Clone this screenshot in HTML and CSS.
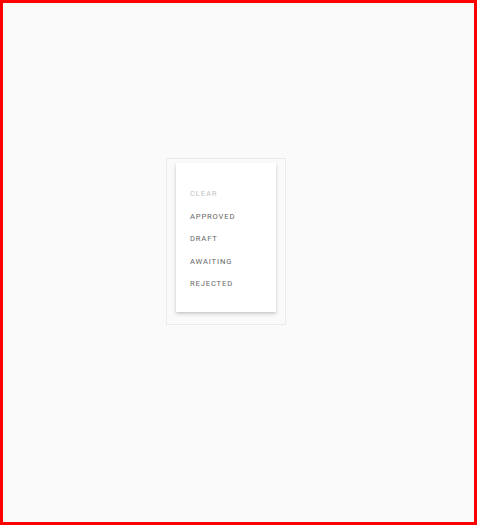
FILE: index.html
```html
<!DOCTYPE html>
<html>
<head>
<meta charset="utf-8">
<link rel="stylesheet" href="styles.css">
</head>
<body>
<div class="frame">
  <div class="menu-wrap">
    <ul class="menu">
      <li class="item disabled">CLEAR</li>
      <li class="item">APPROVED</li>
      <li class="item">DRAFT</li>
      <li class="item">AWAITING</li>
      <li class="item">REJECTED</li>
    </ul>
  </div>
</div>
</body>
</html>
```

FILE: styles.css
```css
html, body {
  margin: 0;
  padding: 0;
  background: #fafafa;
}
.frame {
  box-sizing: border-box;
  width: 477px;
  height: 525px;
  border: 3px solid #ff0000;
  padding: 155px 0 0 163px;
  display: flex;
  align-items: flex-start;
}
.menu-wrap {
  border: 1px solid #ebebeb;
  padding: 4px 9px 12px 9px;
}
.menu {
  list-style: none;
  margin: 0;
  width: 72px;
  padding: 20px 14px 16.5px 14px;
  background: #ffffff;
  box-shadow: 0 2px 4px rgba(0,0,0,0.16), 0 1px 2px rgba(0,0,0,0.08);
}
.item {
  font-family: Roboto, "Noto Sans", sans-serif;
  font-size: 7.6px;
  letter-spacing: 0.85px;
  line-height: 22.5px;
  height: 22.5px;
  color: #666666;
  white-space: nowrap;
}
.item.disabled {
  color: #c2c2c2;
}
```
